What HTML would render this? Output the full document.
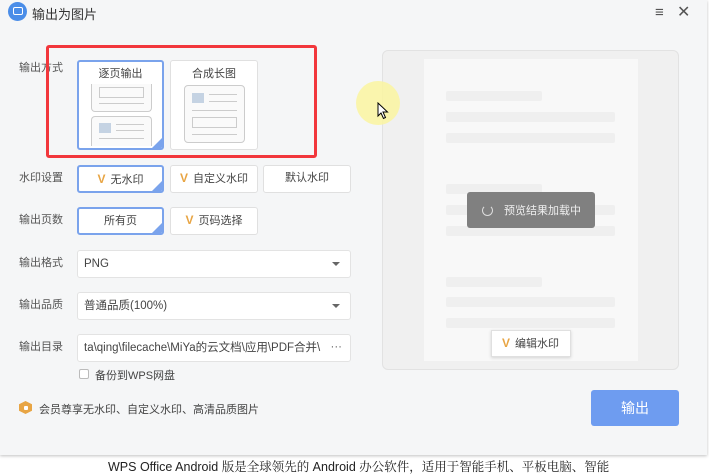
<!DOCTYPE html>
<html><head><meta charset="utf-8"><style>
*{margin:0;padding:0;box-sizing:border-box}
body{width:709px;height:474px;background:#fff;font-family:"Liberation Sans","Noto Sans CJK SC",sans-serif;font-size:12px;color:#333;position:relative;overflow:hidden}
.dlg{position:absolute;left:0;top:0;width:707px;height:455px;background:#f5f6f7;box-shadow:0 1px 3px rgba(0,0,0,.25)}
.a{position:absolute}
.lbl{position:absolute;left:19px;font-size:11px;color:#555;line-height:14px}
.btn{position:absolute;background:#fff;border:1px solid #e0e0e0;border-radius:3px;text-align:center;font-size:11px;color:#444;line-height:25px}
.sel{border:2px solid #7aa3ec;overflow:hidden}
.sel:after{content:"";position:absolute;right:-1px;bottom:-1px;width:0;height:0;border-left:12px solid transparent;border-bottom:12px solid #7aa3ec}
.v{color:#e8a544;font-weight:bold;font-size:12px;margin-right:5px}
.inp{position:absolute;left:77px;width:274px;height:28px;background:#fff;border:1px solid #e3e3e3;border-radius:3px;font-size:11.5px;color:#444;line-height:26px;padding-left:6px}
.arr{position:absolute;right:10px;top:11px;border-left:4px solid transparent;border-right:4px solid transparent;border-top:4px solid #666}
.bar{position:absolute;left:446px;height:10px;background:#efefef;border-radius:2px}
.pg{position:absolute;border:1px solid #ccc;border-radius:4px;background:#fafafa}
</style></head><body>
<div class="dlg">
<div class="a" style="left:8px;top:2px;width:19px;height:19px;border-radius:50%;background:#4a8de8"></div>
<div class="a" style="left:13px;top:7px;width:10px;height:8px;border:1.5px solid #fff;border-radius:2px"></div>
<div class="a" style="left:32px;top:4px;font-size:13px;color:#333">输出为图片</div>
<div class="a" style="left:655px;top:4px;font-size:15px;color:#555">≡</div>
<div class="a" style="left:677px;top:2px;font-size:16px;color:#555">✕</div>

<div class="lbl" style="top:61px">输出方式</div>
<div class="btn sel" style="left:77px;top:60px;width:87px;height:90px;line-height:normal">
 <div class="a" style="left:0;top:3px;width:83px;font-size:11px">逐页输出</div>
 <div class="pg" style="left:12px;top:22px;width:61px;height:28px;border-top:none;border-radius:0 0 4px 4px"><div class="a" style="left:7px;top:3px;width:45px;height:11px;border:1px solid #ccc"></div><div class="a" style="left:7px;top:19px;width:45px;height:1px;background:#ccc"></div></div>
 <div class="pg" style="left:12px;top:54px;width:61px;height:30px;border-bottom:none;border-radius:4px 4px 0 0"><div class="a" style="left:7px;top:6px;width:12px;height:10px;background:#c5d3e3"></div><div class="a" style="left:24px;top:7px;width:28px;height:1px;background:#ccc"></div><div class="a" style="left:24px;top:13px;width:28px;height:1px;background:#ccc"></div><div class="a" style="left:7px;top:21px;width:45px;height:1px;background:#ccc"></div></div>
</div>
<div class="btn" style="left:170px;top:60px;width:88px;height:90px;line-height:normal">
 <div class="a" style="left:0;top:4px;width:86px;font-size:11px">合成长图</div>
 <div class="pg" style="left:13px;top:24px;width:61px;height:58px"><div class="a" style="left:7px;top:7px;width:12px;height:10px;background:#c5d3e3"></div><div class="a" style="left:24px;top:8px;width:28px;height:1px;background:#ccc"></div><div class="a" style="left:24px;top:15px;width:28px;height:1px;background:#ccc"></div><div class="a" style="left:7px;top:24px;width:45px;height:1px;background:#ccc"></div><div class="a" style="left:7px;top:31px;width:45px;height:11px;border:1px solid #ccc"></div><div class="a" style="left:7px;top:48px;width:45px;height:1px;background:#ccc"></div></div>
</div>
<div class="a" style="left:46px;top:45px;width:271px;height:113px;border:3px solid #f2373c;border-radius:3px"></div>

<div class="lbl" style="top:171px">水印设置</div>
<div class="btn sel" style="left:77px;top:165px;width:87px;height:28px;line-height:24px"><span class="v">V</span>无水印</div>
<div class="btn" style="left:170px;top:165px;width:88px;height:28px"><span class="v">V</span>自定义水印</div>
<div class="btn" style="left:263px;top:165px;width:88px;height:28px">默认水印</div>

<div class="lbl" style="top:213px">输出页数</div>
<div class="btn sel" style="left:77px;top:207px;width:87px;height:28px;line-height:24px">所有页</div>
<div class="btn" style="left:170px;top:207px;width:88px;height:28px"><span class="v">V</span>页码选择</div>

<div class="lbl" style="top:256px">输出格式</div>
<div class="inp" style="top:250px">PNG<div class="arr"></div></div>
<div class="lbl" style="top:298px">输出品质</div>
<div class="inp" style="top:292px">普通品质(100%)<div class="arr"></div></div>
<div class="lbl" style="top:340px">输出目录</div>
<div class="inp" style="top:334px">ta\qing\filecache\MiYa的云文档\应用\PDF合并\<span class="a" style="right:8px;top:-1px;color:#666">···</span></div>
<div class="a" style="left:79px;top:369px;width:10px;height:10px;border:1px solid #bbb;border-radius:2px;background:#fff"></div>
<div class="a" style="left:95px;top:367px;font-size:11px;color:#444">备份到WPS网盘</div>
<div class="a" style="left:19px;top:401px;width:13px;height:13px;background:#e8a544;border-radius:3px;clip-path:polygon(50% 0,100% 25%,100% 75%,50% 100%,0 75%,0 25%)"></div>
<div class="a" style="left:24px;top:406px;width:4px;height:4px;background:#fff;border-radius:1px"></div>
<div class="a" style="left:39px;top:401px;font-size:11px;color:#444">会员尊享无水印、自定义水印、高清品质图片</div>

<div class="a" style="left:382px;top:50px;width:297px;height:320px;background:#f0f0f0;border:1px solid #e2e2e2;border-radius:6px"></div>
<div class="a" style="left:424px;top:59px;width:214px;height:302px;background:#f8f8f8"></div>
<div class="bar" style="top:91px;width:96px"></div><div class="bar" style="top:112px;width:169px"></div><div class="bar" style="top:133px;width:169px"></div>
<div class="bar" style="top:184px;width:96px"></div><div class="bar" style="top:205px;width:169px"></div><div class="bar" style="top:226px;width:169px"></div>
<div class="bar" style="top:277px;width:96px"></div><div class="bar" style="top:297px;width:169px"></div><div class="bar" style="top:318px;width:169px"></div>
<div class="a" style="left:467px;top:192px;width:128px;height:36px;background:#808080;border-radius:3px"></div>
<div class="a" style="left:482px;top:205px;width:11px;height:11px;border:1.5px solid #ddd;border-top-color:transparent;border-radius:50%"></div>
<div class="a" style="left:504px;top:202px;font-size:11px;color:#eee">预览结果加载中</div>
<div class="a" style="left:491px;top:330px;width:80px;height:27px;background:#fff;border:1px solid #e0e0e0;box-shadow:0 1px 3px rgba(0,0,0,.15);font-size:11px;line-height:25px;padding-left:10px;color:#444"><span class="v">V</span>编辑水印</div>
<div class="a" style="left:591px;top:390px;width:88px;height:36px;background:#6e9cf0;border-radius:3px;color:#fff;font-size:14px;text-align:center;line-height:36px">输出</div>
<div class="a" style="left:356px;top:81px;width:44px;height:44px;border-radius:50%;background:rgba(250,245,160,.85)"></div>
<svg class="a" style="left:377px;top:102px" width="12" height="18" viewBox="0 0 12 18"><path d="M1 1 L1 14 L4 11 L6.5 16.5 L8.5 15.5 L6 10 L10.5 10 Z" fill="#fff" stroke="#000" stroke-width="1"/></svg>
</div>
<div class="a" style="left:108px;top:457px;font-family:'Liberation Sans','Noto Serif CJK SC',serif;font-size:12.5px;color:#222;white-space:nowrap">WPS Office Android 版是全球领先的 Android 办公软件，适用于智能手机、平板电脑、智能</div>
</body></html>
